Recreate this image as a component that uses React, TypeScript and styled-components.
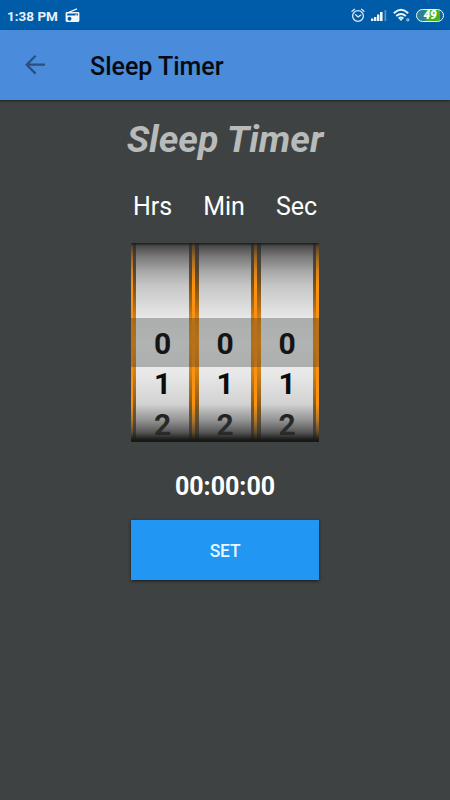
import React from "react";
import styled, { createGlobalStyle } from "styled-components";

const GlobalStyle = createGlobalStyle`
  * { box-sizing: border-box; }
  body { margin: 0; background: #3e4242; font-family: Roboto, sans-serif; }
`;

const Screen = styled.div`
  width: 450px;
  height: 800px;
  background: #3e4242;
  display: flex;
  flex-direction: column;
  overflow: hidden;
`;

const StatusBar = styled.div`
  height: 30px;
  flex: none;
  background: #005ca8;
  color: #eaf2fa;
  display: flex;
  align-items: center;
  padding: 0 6px 0 7px;
`;

const Clock = styled.span`
  font-size: 13.5px;
  font-weight: 700;
  line-height: 30px;
  width: 58px;
  padding-top: 1px;
  white-space: nowrap;
`;

const StatusIcons = styled.div`
  margin-left: auto;
  display: flex;
  align-items: center;
`;

const Glyph = styled.svg<{ $gap?: number }>`
  display: block;
  flex: none;
  margin-right: ${(p) => p.$gap ?? 0}px;
`;

const Battery = styled.div`
  width: 28px;
  height: 13px;
  border: 1.4px solid #f2f8f2;
  border-radius: 7px;
  background: linear-gradient(90deg, #2c7f96 0 25%, #43b51c 45% 88%, #0c66a0 88%);
  color: #fff;
  font-size: 12px;
  font-weight: 900;
  font-style: italic;
  line-height: 11px;
  text-align: center;
  letter-spacing: -0.3px;
`;

const AppBar = styled.header`
  height: 70px;
  flex: none;
  background: #4b8bdc;
  box-shadow: 0 1px 2px rgba(0, 0, 0, 0.5);
  display: flex;
  align-items: center;
  padding: 0 0 0 25px;
`;

const BarTitle = styled.h1`
  margin: 3px 0 0 45px;
  font-size: 25px;
  font-weight: 500;
  line-height: 30px;
  color: #050a10;
`;

const Content = styled.main`
  display: flex;
  flex-direction: column;
  align-items: center;
`;

const Heading = styled.h2`
  margin: 17px 0 0;
  font-size: 37.5px;
  line-height: 44px;
  font-weight: 700;
  font-style: italic;
  color: #b9bbbb;
  white-space: nowrap;
`;

const Labels = styled.div`
  display: flex;
  gap: 31px;
  margin-top: 31px;
  font-size: 25px;
  line-height: 30px;
  color: #fff;
`;

const Picker = styled.div`
  position: relative;
  display: grid;
  grid-template-columns: 63px 62px 63px;
  width: 188px;
  height: 199px;
  margin-top: 21px;
  overflow: hidden;
`;

const Wheel = styled.div<{ $left: number; $right: number }>`
  padding: 0 ${(p) => p.$right}px 0 ${(p) => p.$left}px;
  background: #fa9210;
  display: flex;
  min-width: 0;
`;

const Rim = styled.div<{ $w?: number }>`
  width: ${(p) => p.$w ?? 3}px;
  flex: none;
  background: linear-gradient(#444 0, #54452f 12%, #74501b 20%, #a6681a 30%, #e48a17 40%, #f09216 50%, #cf8018 64%, #7b561e 83%, #3b342a 100%);
`;

const Face = styled.div`
  flex: 1;
  padding-top: 81px;
  background: linear-gradient(#b4b4b4 0, #c4c4c4 20%, #e8e8e8 37%, #f0f0f0 50%, #e8e8e8 65%, #c8c8c8 86%, #b8b8b8 100%);
  color: #0c0c0c;
  font-size: 30px;
  font-weight: 700;
  text-align: center;
`;

const Digit = styled.div`
  height: 40.3px;
  line-height: 40.3px;
`;

const Shade = styled.div`
  position: absolute;
  inset: 0;
  background: linear-gradient(#1a1a1a 0, rgba(45, 45, 45, 0.78) 1.5%, rgba(60, 60, 60, 0.5) 7%, rgba(70, 70, 70, 0.2) 14%, rgba(70, 70, 70, 0) 21%, rgba(70, 70, 70, 0) 81%, rgba(80, 80, 80, 0.42) 89%, rgba(55, 55, 55, 0.76) 95%, #171916 99%);
`;

const Selection = styled.div`
  position: absolute;
  left: 0;
  right: 0;
  top: 75px;
  height: 49px;
  background: rgba(40, 42, 42, 0.31);
`;

const Remaining = styled.div`
  margin-top: 30px;
  font-size: 25px;
  line-height: 30px;
  font-weight: 700;
  color: #fff;
`;

const SetButton = styled.button`
  width: 188px;
  height: 60px;
  margin-top: 18px;
  padding: 2px 0 0;
  border: 0;
  background: #2196f3;
  box-shadow: 0 1px 3px rgba(0, 0, 0, 0.6);
  color: #e9f5ff;
  font: 500 17.5px/20px Roboto, sans-serif;
  letter-spacing: -0.2px;
`;

const wheels = [
  { id: "hours", left: 2, right: 2 },
  { id: "minutes", left: 1, right: 2 },
  { id: "seconds", left: 1, right: 3 },
];

export default function App() {
  return (
    <Screen>
      <GlobalStyle />
      <StatusBar>
        <Clock>1:38 PM</Clock>
        <Glyph width="15" height="15" viewBox="0 0 15 15" fill="none">
          <path d="M2 5 12 .9" stroke="#f4f8fc" strokeWidth="1.2" />
          <path fillRule="evenodd" fill="#f4f8fc" d="M2 4h11q1.4 0 1.4 1.4v7.2q0 1.4-1.4 1.4H2Q.6 14 .6 12.600V5.400Q.6 4 2 4Zm.2 1.400v2.200h8.300V6.300h1.100v1.300h1.300V5.400Zm2.300 3.300a2 2 0 1 0 0 4 2 2 0 0 0 0-4Z" />
        </Glyph>
        <StatusIcons>
          <Glyph $gap={6} width="14" height="15" viewBox="0 0 14 15" fill="none" stroke="#dce9f5" strokeWidth="1.3" strokeLinecap="round">
            <circle cx="7" cy="8" r="5.4" />
            <path d="M1 3.300 3.500 1.300M13 3.300l-2.500-2M4.600 6.800 7 9l2.700-1.900" />
          </Glyph>
          <Glyph $gap={6} width="16" height="13" viewBox="0 0 16 13">
            <path fill="#edf5fc" d="M0 9.500h2.400V12H0zM3 8h2.400v4H3zM6 5.500h2.400V12H6zM9 3h2.600v9H9z" />
            <path fill="#5d94c6" d="M13.500 1h1.700v11h-1.700z" />
          </Glyph>
          <Glyph $gap={5} width="18" height="14" viewBox="0 0 18 14" fill="none" stroke="#edf5fc" strokeWidth="1.900">
            <path d="M.8 5.200q7.200-6.700 14.400 0M3.200 8q4.800-4.200 9.600 0M5.600 10.500q2.400-2 4.800 0" />
            <path d="m6.100 10.800 1.900 2.200 1.900-2.200Z" fill="#edf5fc" stroke="none" />
            <circle cx="14.800" cy="11.800" r="1.100" strokeWidth="1.100" stroke="#a8c8e5" />
          </Glyph>
          <Battery>49</Battery>
        </StatusIcons>
      </StatusBar>
      <AppBar>
        <Glyph width="20" height="20" viewBox="0 0 20 20" fill="none" stroke="#2b507f" strokeWidth="2.300">
          <path d="M20 9.700H2M10.600.8 1.700 9.700l8.900 8.900" />
        </Glyph>
        <BarTitle>Sleep Timer</BarTitle>
      </AppBar>
      <Content>
        <Heading>Sleep Timer</Heading>
        <Labels>
          <span>Hrs</span>
          <span>Min</span>
          <span>Sec</span>
        </Labels>
        <Picker>
          {wheels.map((w) => (
            <Wheel key={w.id} $left={w.left} $right={w.right}>
              <Rim $w={w.id === "hours" ? 3 : 4} />
              <Face>
                {[0, 1, 2].map((n) => (
                  <Digit key={n}>{n}</Digit>
                ))}
              </Face>
              <Rim />
            </Wheel>
          ))}
          <Shade />
          <Selection />
        </Picker>
        <Remaining>00:00:00</Remaining>
        <SetButton>SET</SetButton>
      </Content>
    </Screen>
  );
}
